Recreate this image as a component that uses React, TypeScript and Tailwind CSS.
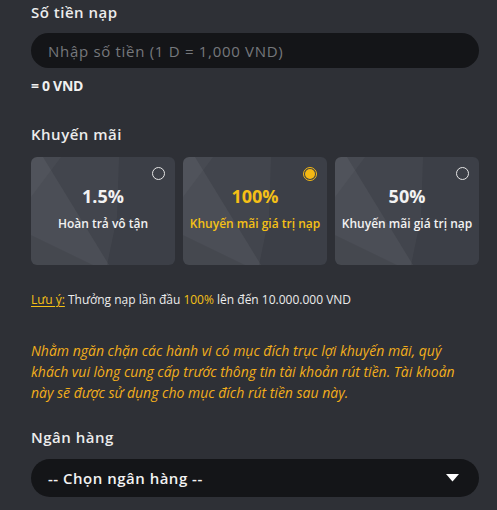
const font = { fontFamily: '"Open Sans", "Noto Sans", sans-serif' };

const promos = [
  { value: '1.5%', label: 'Hoàn trả vô tận', active: false },
  { value: '100%', label: 'Khuyến mãi giá trị nạp', active: true },
  { value: '50%', label: 'Khuyến mãi giá trị nạp', active: false },
];

function CardBg() {
  return (
    <svg
      className="absolute inset-0 h-full w-full"
      viewBox="0 0 144 108"
      preserveAspectRatio="none"
    >
      <rect width="144" height="108" fill="#3c3f47" />
      <polygon points="0,0 88,0 86,60 76,108 0,108" fill="#ffffff" fillOpacity="0.035" />
      <polygon points="0,0 12,0 78,108 0,108" fill="#ffffff" fillOpacity="0.05" />
      <polygon points="0,0 30,0 0,40" fill="#ffffff" fillOpacity="0.03" />
      <polygon points="0,78 62,108 0,108" fill="#000000" fillOpacity="0.07" />
    </svg>
  );
}

function PromoCard({ value, label, active }: { value: string; label: string; active: boolean }) {
  return (
    <div className="relative h-[108px] overflow-hidden rounded-[6px]">
      <CardBg />
      <div className="absolute right-[10px] top-[10px]">
        {active ? (
          <div className="flex h-[14px] w-[14px] items-center justify-center rounded-full border border-[#f5b914]">
            <div className="h-[10px] w-[10px] rounded-full bg-[#f5b914]" />
          </div>
        ) : (
          <div className="h-[13px] w-[13px] rounded-full border-[1.5px] border-[#e6e6e6]" />
        )}
      </div>
      <div
        className={
          'relative flex h-full flex-col items-center pt-[26px] ' +
          (active ? 'text-[#f5c016]' : 'text-[#f2f2f2]')
        }
      >
        <div className="text-[18px] font-bold leading-[26px]">{value}</div>
        <div className="mt-[6px] text-[12px] font-semibold leading-[18px] whitespace-nowrap">{label}</div>
      </div>
    </div>
  );
}

export default function App() {
  return (
    <div className="h-[510px] w-[497px] bg-[#2e3036] pl-[31px]" style={font}>
      <div className="w-[448px]">
        <div className="pt-[2px] text-[15px] font-semibold leading-[20px] tracking-[0.5px] text-[#ececec]">
          Số tiền nạp
        </div>

        <div className="mt-[11px] flex h-[35px] items-center rounded-full bg-[#141518] px-[17px]">
          <span className="text-[15px] leading-[20px] tracking-[0.7px] text-[#76787c]">
            Nhập số tiền (1 D = 1,000 VND)
          </span>
        </div>

        <div className="mt-[9px] text-[14px] font-bold leading-[18px] tracking-[-0.3px] text-[#f0f0f0]">
          = 0 VND
        </div>

        <div className="mt-[29px] text-[15px] font-semibold leading-[20px] tracking-[0.5px] text-[#ececec]">
          Khuyến mãi
        </div>

        <div className="mt-[13px] grid grid-cols-3 gap-[8px]">
          {promos.map((p, i) => (
            <PromoCard key={i} {...p} />
          ))}
        </div>

        <div className="mt-[26px] text-[12px] leading-[18px] text-[#ececec]">
          <span className="text-[#f5c016] underline underline-offset-2">Lưu ý:</span> Thưởng nạp lần
          đầu <span className="text-[#f5c016]">100%</span> lên đến 10.000.000 VND
        </div>

        <p className="mt-[31px] pr-[10px] text-[14px] italic leading-[21px] text-[#f2ae1c]">
          Nhằm ngăn chặn các hành vi có mục đích trục lợi khuyến mãi, quý khách vui lòng cung cấp
          trước thông tin tài khoản rút tiền. Tài khoản này sẽ được sử dụng cho mục đích rút tiền sau
          này.
        </p>

        <div className="mt-[24px] text-[15px] font-semibold leading-[20px] tracking-[0.5px] text-[#ececec]">
          Ngân hàng
        </div>

        <div className="mt-[12px] flex h-[38px] items-center justify-between rounded-full bg-[#141518] pl-[17px] pr-[20px]">
          <span className="text-[15px] font-semibold leading-[20px] tracking-[0.5px] text-[#f2f2f2]">
            -- Chọn ngân hàng --
          </span>
          <svg width="13" height="8" viewBox="0 0 13 8">
            <polygon points="0,0 13,0 6.5,7.5" fill="#ffffff" />
          </svg>
        </div>
      </div>
    </div>
  );
}
